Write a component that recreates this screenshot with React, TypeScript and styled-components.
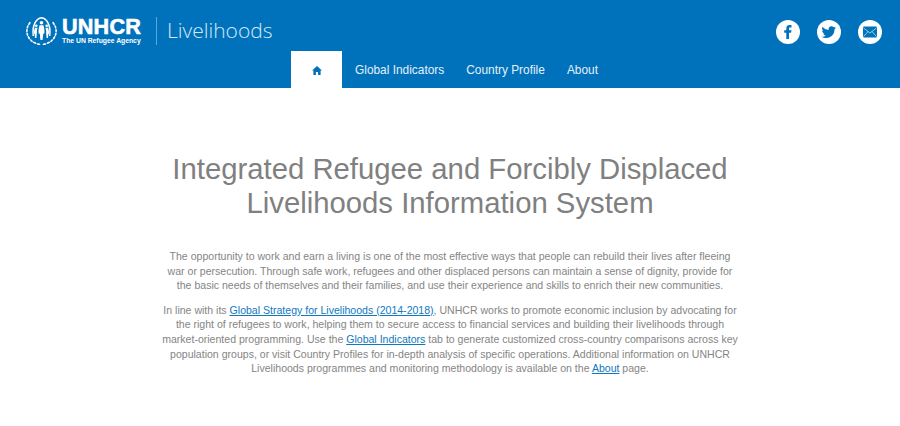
import React from 'react';
import styled, { createGlobalStyle } from 'styled-components';

const GlobalStyle = createGlobalStyle`
  html, body {
    margin: 0;
    padding: 0;
    background: #fff;
    font-family: "Liberation Sans", Arial, sans-serif;
  }
`;

const Header = styled.header`
  height: 88px;
  background: #0072bc;
  display: flex;
  flex-direction: column;
  box-sizing: border-box;
`;

const TopRow = styled.div`
  height: 51px;
  display: flex;
  align-items: center;
  justify-content: space-between;
  padding: 0 18px 0 25px;
`;

const Brand = styled.div`
  display: flex;
  align-items: center;
  height: 30px;
  margin-top: 10px;
  color: #fff;
`;

const Emblem = styled.svg`
  width: 33px;
  height: 30px;
  margin-right: 4px;
`;

const Wordmark = styled.div`
  display: flex;
  flex-direction: column;
  width: 81px;
`;

const WordmarkTitle = styled.span`
  font-size: 21.6px;
  line-height: 20px;
  font-weight: 700;
  letter-spacing: 0.2px;
  -webkit-text-stroke: 0.6px #fff;
`;

const WordmarkSub = styled.span`
  font-size: 6.8px;
  line-height: 8px;
  font-weight: 700;
  white-space: nowrap;
`;

const Divider = styled.div`
  width: 1px;
  height: 28px;
  background: #5ca6d8;
  margin: 0 10px 0 13px;
`;

const ProductName = styled.span`
  font-family: "Open Sans", sans-serif;
  font-weight: 300;
  font-size: 21px;
  padding-bottom: 2px;
  color: #d5e8f5;
`;

const Social = styled.div`
  display: flex;
  gap: 17px;
  margin-top: 13px;
`;

const SocialIcon = styled.a`
  width: 24px;
  height: 24px;
  border-radius: 50%;
  background: #fff;
  display: flex;
  align-items: center;
  justify-content: center;
`;

const Nav = styled.nav`
  height: 37px;
  display: flex;
  padding-left: 291px;
`;

const NavItem = styled.a<{ $active?: boolean }>`
  height: 37px;
  display: flex;
  align-items: center;
  justify-content: center;
  box-sizing: border-box;
  padding: 0 11px;
  margin-right: ${p => (p.$active ? '2px' : '0')};
  font-size: 11.9px;
  color: #e4f0f8;
  background: ${p => (p.$active ? '#fff' : 'transparent')};
  width: ${p => (p.$active ? '51px' : 'auto')};
`;

const HomeIcon = styled.svg`
  width: 10px;
  height: 9px;
  margin-top: 2px;
  fill: #0072bc;
`;

const Main = styled.main`
  width: 578px;
  margin: 0 auto;
  padding-top: 64px;
  text-align: center;
  color: #858585;
`;

const Title = styled.h1`
  width: 600px;
  margin: 0 0 29px -11px;
  font-size: 29.3px;
  line-height: 34px;
  font-weight: 400;
  color: #808080;
`;

const Paragraph = styled.p`
  margin: 0 0 10px;
  font-size: 10.55px;
  line-height: 14.6px;
`;

const TextLink = styled.a`
  color: #0f79c0;
  text-decoration: underline;
`;

// laurel leaves sitting on an ellipse around the figures, mirrored left/right
const leafAngles = [78, 62, 46, 30, 14, -2, -18, -34];

const leaves = leafAngles.flatMap(deg => {
  const a = (deg * Math.PI) / 180;
  const x = 14.6 * Math.cos(a);
  const y = 15 + 13.4 * Math.sin(a);
  return [
    { x: 16.5 + x, y, r: deg + 90 },
    { x: 16.5 - x, y, r: 90 - deg },
  ];
});

export default function App() {
  return (
    <>
      <GlobalStyle />
      <Header>
        <TopRow>
          <Brand>
            <Emblem viewBox="0 0 33 30" fill="#fff">
              {leaves.map((l, i) => (
                <ellipse key={i} cx={l.x} cy={l.y} rx="1.9" ry="0.85" transform={`rotate(${l.r} ${l.x} ${l.y})`} />
              ))}
              <path d="M8.300 20C6.800 10 11 2.300 16.500 1.800 22 2.300 26.200 10 24.700 20" fill="none" stroke="#fff" strokeWidth="1.5" />
              <circle cx="16.500" cy="6.800" r="1.800" />
              <path d="M14.600 9.200h3.800c.9 2.500 1.200 5.500 1 8.300l-1.200.2-.6 6.300h-2.200l-.6-6.300-1.200-.2c-.2-2.800.1-5.800 1-8.300z" />
              <circle cx="11.300" cy="9.800" r="1.300" />
              <path d="M10 11.700h2.500c-.6 2-.9 4-.7 6l-.4 4.300H10l-.4-4.300-.7-.2c0-2.200.4-4.200 1.100-5.800z" />
              <circle cx="21.700" cy="9.800" r="1.300" />
              <path d="M23 11.700h-2.500c.6 2 .9 4 .7 6l.4 4.300H23l.4-4.300.7-.2c0-2.200-.4-4.200-1.100-5.800z" />
            </Emblem>
            <Wordmark>
              <WordmarkTitle>UNHCR</WordmarkTitle>
              <WordmarkSub>The UN Refugee Agency</WordmarkSub>
            </Wordmark>
            <Divider />
            <ProductName>Livelihoods</ProductName>
          </Brand>
          <Social>
            <SocialIcon>
              <svg width="24" height="24" viewBox="0 0 24 24" fill="#0072bc">
                <path d="M13 19v-6.300h2.100l.4-2.500H13V8.700c0-.7.3-1.200 1.200-1.200h1.300V5.200c-.4 0-1.100-.1-1.900-.1-2 0-3.300 1.200-3.300 3.300v1.800H8.200v2.500h2.100V19z" />
              </svg>
            </SocialIcon>
            <SocialIcon>
              <svg width="24" height="24" viewBox="0 0 24 24" fill="#0072bc">
                <path d="M19 7.700c-.5.200-1.100.4-1.700.5.600-.4 1.100-1 1.300-1.700-.6.300-1.200.600-1.900.7a3 3 0 0 0-5.100 2.700c-2.500-.1-4.700-1.300-6.100-3.100-.8 1.400-.4 3.100.9 4-.5 0-.9-.1-1.300-.4 0 1.500 1 2.700 2.400 3-.4.100-.9.100-1.300 0 .4 1.200 1.500 2.100 2.800 2.100-1.300 1-2.900 1.400-4.400 1.200 1.300.8 2.900 1.300 4.500 1.300 5.500 0 8.600-4.600 8.400-8.800.6-.4 1.100-1 1.500-1.500z" />
              </svg>
            </SocialIcon>
            <SocialIcon>
              <svg width="24" height="24" viewBox="0 0 24 24">
                <rect x="5" y="6.500" width="14" height="11" rx="1" fill="#0072bc" />
                <path d="M5.500 8l6.500 5 6.500-5M5.500 16.500l4.500-5M18.500 16.500l-4.500-5" fill="none" stroke="#fff" strokeWidth="0.6" />
              </svg>
            </SocialIcon>
          </Social>
        </TopRow>
        <Nav>
          <NavItem $active>
            <HomeIcon viewBox="0 0 11 10">
              <path d="M5.500 0L11 5H9.500v5H6.700V6.800H4.300V10H1.500V5H0z" />
            </HomeIcon>
          </NavItem>
          <NavItem>Global Indicators</NavItem>
          <NavItem>Country Profile</NavItem>
          <NavItem>About</NavItem>
        </Nav>
      </Header>
      <Main>
        <Title>
          Integrated Refugee and Forcibly Displaced
          <br />
          Livelihoods Information System
        </Title>
        <Paragraph>
          The opportunity to work and earn a living is one of the most effective ways that people can rebuild their lives after fleeing
          war or persecution. Through safe work, refugees and other displaced persons can maintain a sense of dignity, provide for
          the basic needs of themselves and their families, and use their experience and skills to enrich their new communities.
        </Paragraph>
        <Paragraph>
          In line with its <TextLink>Global Strategy for Livelihoods (2014-2018)</TextLink>, UNHCR works to promote economic inclusion by advocating for
          the right of refugees to work, helping them to secure access to financial services and building their livelihoods through
          market-oriented programming. Use the <TextLink>Global Indicators</TextLink> tab to generate customized cross-country comparisons across key
          population groups, or visit Country Profiles for in-depth analysis of specific operations. Additional information on UNHCR
          Livelihoods programmes and monitoring methodology is available on the <TextLink>About</TextLink> page.
        </Paragraph>
      </Main>
    </>
  );
}
